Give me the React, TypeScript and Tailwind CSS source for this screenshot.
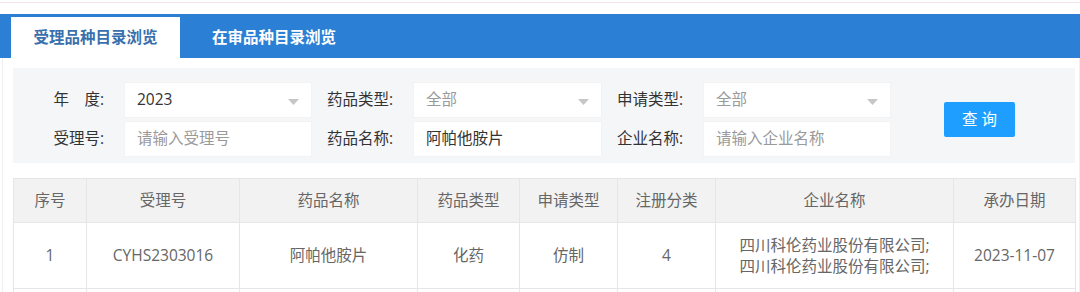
import React from "react";

const Arrow = () => (
  <svg width="11" height="6" viewBox="0 0 11 6" className="absolute right-[12px] top-[16px]">
    <path d="M0 0 L11 0 L5.5 6 Z" fill="#c6c6c6" />
  </svg>
);

const Label = ({ children }: { children: React.ReactNode }) => (
  <div className="h-[36px] flex items-center justify-end pr-[20px] text-[#333] whitespace-nowrap">{children}</div>
);

const Field = ({ value, dark, select }: { value: string; dark?: boolean; select?: boolean }) => (
  <div className="relative h-[36px] bg-white border border-[#f3f3f3] flex items-center pl-[12px]">
    <span className={dark ? "text-[#333]" : "text-[#9a9a9a]"}>{value}</span>
    {select && <Arrow />}
  </div>
);

export default function App() {
  const cols = [73, 153, 178, 102, 98, 98, 238, 122];
  const heads = ["序号", "受理号", "药品名称", "药品类型", "申请类型", "注册分类", "企业名称", "承办日期"];
  return (
    <div className="w-[1080px] h-[292px] overflow-hidden bg-white text-[15.5px] font-['Open_Sans','Noto_Sans_CJK_SC',sans-serif]">
      <div className="h-[2px]" />
      <div className="h-px bg-[#f6e6eb]" />
      <div className="h-[11px]" />
      <div className="h-[44px] bg-[#2b7fd4] flex items-end pl-[11px]">
        <div className="h-[41px] w-[169px] bg-white flex items-center justify-center text-[#3a6fae] font-bold">受理品种目录浏览</div>
        <div className="h-[41px] pl-[32px] flex items-center text-white font-bold">在审品种目录浏览</div>
      </div>
      <div className="ml-[2px] border-x border-[#efefef] pl-[10px] pr-[4px] pt-[10px] h-[300px]">
        <div className="bg-[#f5f6f8] pt-[14px] pb-[6px] pl-[10px] flex items-center">
          <div className="grid grid-cols-[101px_188px_101px_189px_101px_188px] gap-y-[3px]">
            <Label>年　度:</Label>
            <Field value="2023" dark select />
            <Label>药品类型:</Label>
            <Field value="全部" select />
            <Label>申请类型:</Label>
            <Field value="全部" select />
            <Label>受理号:</Label>
            <Field value="请输入受理号" />
            <Label>药品名称:</Label>
            <Field value="阿帕他胺片" dark />
            <Label>企业名称:</Label>
            <Field value="请输入企业名称" />
          </div>
          <button className="ml-[53px] w-[71px] h-[35px] bg-[#1e9fff] text-white rounded-[2px] tracking-[4px] pl-[4px]">查询</button>
        </div>
        <table className="mt-[15px] table-fixed border-collapse w-[1062px] text-[#666] text-center">
          <colgroup>
            {cols.map((w, i) => (
              <col key={i} style={{ width: w }} />
            ))}
          </colgroup>
          <thead>
            <tr className="h-[44px] bg-[#f2f2f2]">
              {heads.map((h) => (
                <th key={h} className="font-normal border border-[#e6e6e6]">{h}</th>
              ))}
            </tr>
          </thead>
          <tbody>
            <tr className="h-[66px]">
              <td className="border border-[#e6e6e6]">1</td>
              <td className="border border-[#e6e6e6]">CYHS2303016</td>
              <td className="border border-[#e6e6e6]">阿帕他胺片</td>
              <td className="border border-[#e6e6e6]">化药</td>
              <td className="border border-[#e6e6e6]">仿制</td>
              <td className="border border-[#e6e6e6]">4</td>
              <td className="border border-[#e6e6e6] leading-[21px]">
                四川科伦药业股份有限公司;<br />四川科伦药业股份有限公司;
              </td>
              <td className="border border-[#e6e6e6]">2023-11-07</td>
            </tr>
            <tr className="h-[66px]">
              {cols.map((_, i) => (
                <td key={i} className="border border-[#e6e6e6]"></td>
              ))}
            </tr>
          </tbody>
        </table>
      </div>
    </div>
  );
}
